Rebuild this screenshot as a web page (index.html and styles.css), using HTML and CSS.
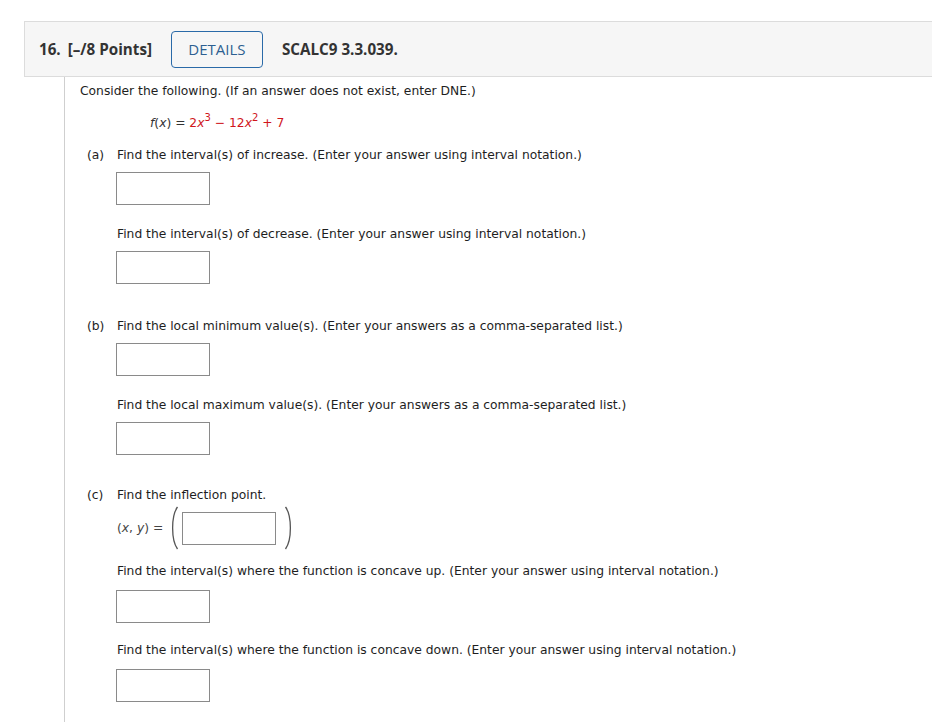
FILE: index.html
```html
<!DOCTYPE html>
<html>
<head>
<meta charset="utf-8">
<link rel="stylesheet" href="styles.css">
</head>
<body>
<div class="question">
  <div class="qhead">
    <span class="qnum">16.</span>
    <span class="qpts">[–/8 Points]</span>
    <button class="details">DETAILS</button>
    <span class="qcode">SCALC9 3.3.039.</span>
  </div>
  <div class="qbody">
    <p class="intro">Consider the following. (If an answer does not exist, enter DNE.)</p>
    <p class="formula"><span class="mvar">f</span>(<span class="mvar">x</span>) = <span class="red">2<span class="mvar">x</span><sup>3</sup> − 12<span class="mvar">x</span><sup>2</sup> + 7</span></p>

    <div class="part">
      <div class="item">
        <p class="prompt"><span class="plabel">(a)</span><span>Find the interval(s) of increase. (Enter your answer using interval notation.)</span></p>
        <div class="box"></div>
      </div>
      <div class="item">
        <p class="prompt"><span class="plabel"></span><span>Find the interval(s) of decrease. (Enter your answer using interval notation.)</span></p>
        <div class="box"></div>
      </div>
    </div>

    <div class="part">
      <div class="item">
        <p class="prompt"><span class="plabel">(b)</span><span>Find the local minimum value(s). (Enter your answers as a comma-separated list.)</span></p>
        <div class="box"></div>
      </div>
      <div class="item">
        <p class="prompt"><span class="plabel"></span><span>Find the local maximum value(s). (Enter your answers as a comma-separated list.)</span></p>
        <div class="box"></div>
      </div>
    </div>

    <div class="part part-c">
      <div class="item">
        <p class="prompt"><span class="plabel">(c)</span><span>Find the inflection point.</span></p>
        <div class="pointrow">
          <span class="xy">(<span class="mvar">x</span>, <span class="mvar">y</span>) =</span>
          <svg class="paren" width="10" height="44" viewBox="0 0 10 44"><path d="M8.5 1 C2 10 2 34 8.5 43" fill="none" stroke="#555" stroke-width="1.3"/></svg>
          <div class="box"></div>
          <svg class="paren" width="10" height="44" viewBox="0 0 10 44"><path d="M1.5 1 C8 10 8 34 1.5 43" fill="none" stroke="#555" stroke-width="1.3"/></svg>
        </div>
      </div>
      <div class="item">
        <p class="prompt"><span class="plabel"></span><span>Find the interval(s) where the function is concave up. (Enter your answer using interval notation.)</span></p>
        <div class="box"></div>
      </div>
      <div class="item">
        <p class="prompt"><span class="plabel"></span><span>Find the interval(s) where the function is concave down. (Enter your answer using interval notation.)</span></p>
        <div class="box"></div>
      </div>
    </div>
  </div>
</div>
</body>
</html>
```

FILE: styles.css
```css
html, body {
  margin: 0;
  padding: 0;
  background: #fff;
}
body {
  font-family: "DejaVu Sans", Verdana, sans-serif;
  font-size: 12.3px;
  color: #1e1e1e;
  overflow: hidden;
  height: 722px;
}
.question {
  margin: 21px 0 0 24px;
}
.qhead {
  height: 54px;
  background: #f6f6f6;
  border: 1px solid #dcdcdc;
  border-right: none;
  display: flex;
  align-items: center;
  padding-left: 14px;
  font-family: "Open Sans", sans-serif;
  font-size: 15.2px;
  font-weight: 700;
  color: #333;
}
.qnum { margin-right: 7px; }
.qpts { margin-right: 19px; }
.details {
  width: 92px;
  height: 37px;
  border: 1px solid #2a6aa8;
  border-radius: 4px;
  background: transparent;
  font-family: "Open Sans", sans-serif;
  font-size: 15px;
  font-weight: 400;
  color: #2d5f91;
  padding: 0;
  margin-right: 19px;
}
.qbody {
  margin-left: 40px;
  border-left: 1px solid #cfcfcf;
  padding: 5px 0 0 15px;
  height: 640px;
}
p { margin: 0; }
.intro { line-height: 18px; }
.formula {
  line-height: 18px;
  margin: 14px 0 0 70px;
  color: #333;
}
.formula sup {
  font-size: 10px;
  line-height: 0;
  vertical-align: 6px;
}
.mvar { font-style: italic; }
.red { color: #d0161b; }
.part {
  margin-top: 14px;
  display: flex;
  flex-direction: column;
  gap: 20px;
}
.part + .part { margin-top: 33px; }
.part + .part-c { margin-top: 31px; gap: 18px; }
.item {
  display: flex;
  flex-direction: column;
  gap: 8px;
}
.part-c .item { gap: 10px; }
.prompt {
  line-height: 18px;
  display: flex;
  margin-left: 7px;
}
.plabel {
  width: 30px;
  flex: none;
}
.box {
  width: 92px;
  height: 31px;
  border: 1px solid #8a8a8a;
  background: #fff;
  margin-left: 36px;
}
.pointrow {
  display: flex;
  align-items: center;
  margin-left: 37px;
  height: 34px;
  margin-top: -3px;
  margin-bottom: -1px;
}
.pointrow .box { margin-left: 3px; margin-right: 8px; }
.xy { color: #444; margin-right: 6px; }
.paren { flex: none; }
```
